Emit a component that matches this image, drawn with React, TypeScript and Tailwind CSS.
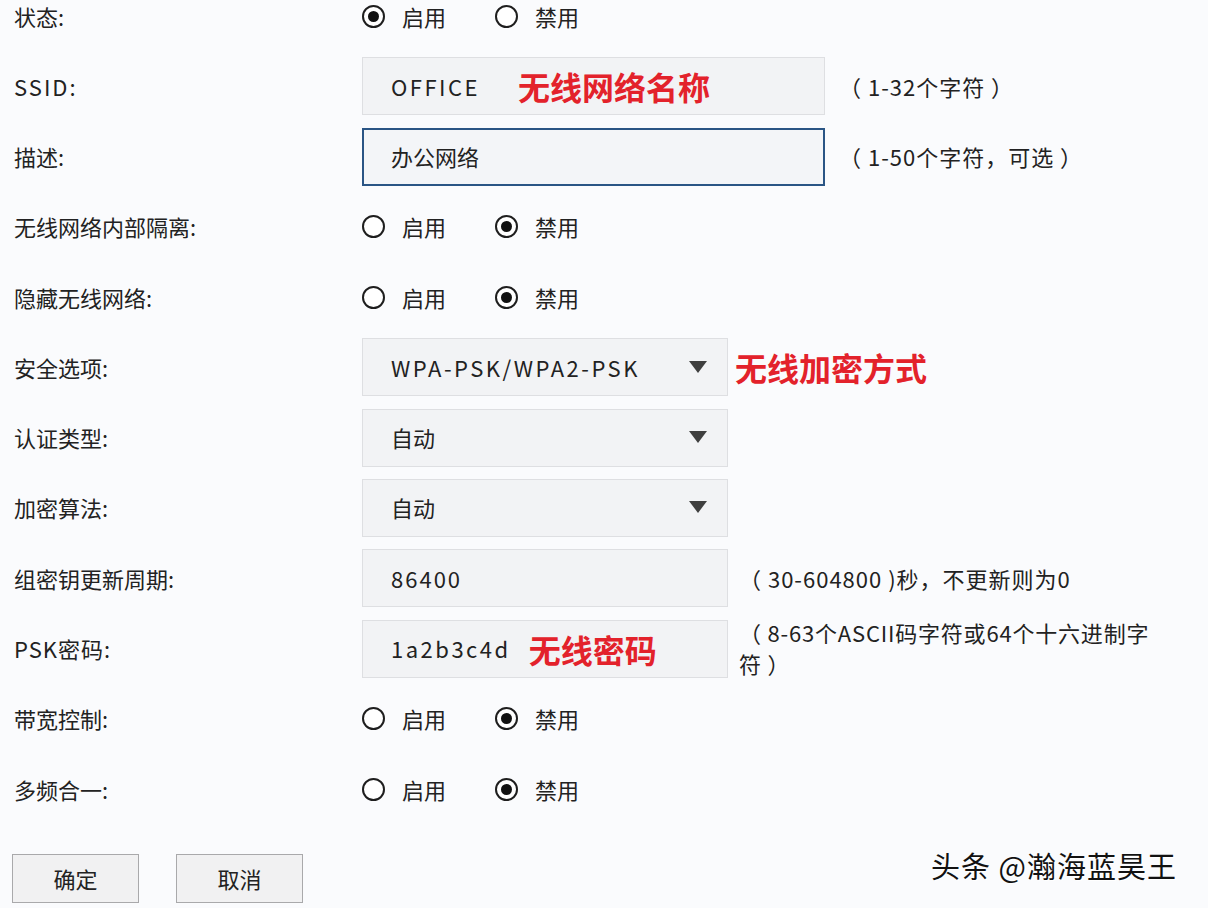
import React from "react";

const FONT = { fontFamily: '"Noto Sans CJK SC", "Noto Sans", sans-serif' };

function Radio({ checked }: { checked: boolean }) {
  return (
    <span className="w-[23px] h-[23px] rounded-full border-2 border-[#1e1e1e] bg-white flex items-center justify-center shrink-0">
      {checked && <span className="w-[11px] h-[11px] rounded-full bg-[#111]" />}
    </span>
  );
}

function RadioPair({ on }: { on: boolean }) {
  return (
    <div className="flex items-center">
      <div className="flex items-center gap-[17px] w-[133px]">
        <Radio checked={on} />
        <span>启用</span>
      </div>
      <div className="flex items-center gap-[17px]">
        <Radio checked={!on} />
        <span>禁用</span>
      </div>
    </div>
  );
}

function Row({ label, children }: { label: React.ReactNode; children: React.ReactNode }) {
  return (
    <div className="h-[70.27px] flex items-center">
      <div className="w-[348px] shrink-0">{label}</div>
      <div className="flex items-center">{children}</div>
    </div>
  );
}

function Box({ wide, focus, children }: { wide?: boolean; focus?: boolean; children: React.ReactNode }) {
  return (
    <div
      className={`${wide ? "w-[463px]" : "w-[366px]"} h-[58px] flex items-center ${
        focus ? "border-2 border-[#2a5585] bg-[#f3f5f8] pl-[27px]" : "border border-[#dedfe2] bg-[#f2f3f5] pl-[28px]"
      }`}
    >
      {children}
    </div>
  );
}

function Select({ value, latin }: { value: string; latin?: boolean }) {
  return (
    <div className="w-[366px] h-[58px] flex items-center justify-between pl-[28px] pr-[20px] border border-[#dedfe2] bg-[#f2f3f5]">
      <span className={latin ? "tracking-[2.5px]" : ""}>{value}</span>
      <svg width="18" height="13" viewBox="0 0 18 13">
        <polygon points="0,0 18,0 9,12" fill="#3f3f3f" />
      </svg>
    </div>
  );
}

const Red = ({ children, ml }: { children: React.ReactNode; ml: string }) => (
  <span className={`text-[32px] font-bold text-[#e3222b] leading-none ${ml}`}>{children}</span>
);

export default function App() {
  return (
    <div className="w-[1208px] h-[908px] overflow-hidden bg-[#fafbfd] text-[#222] text-[22px] relative" style={FONT}>
      <div className="pl-[14px] mt-[-19px]">
        <Row label="状态:">
          <RadioPair on={true} />
        </Row>
        <Row label={<span className="tracking-[2px]">SSID:</span>}>
          <Box wide>
            <span className="tracking-[2.5px]">OFFICE</span>
            <Red ml="ml-[38px]">无线网络名称</Red>
          </Box>
          <span className="ml-[14px] tracking-[1px]">（ 1-32个字符 ）</span>
        </Row>
        <Row label="描述:">
          <Box wide focus>
            <span>办公网络</span>
          </Box>
          <span className="ml-[14px] tracking-[1px]">（ 1-50个字符，可选 ）</span>
        </Row>
        <Row label="无线网络内部隔离:">
          <RadioPair on={false} />
        </Row>
        <Row label="隐藏无线网络:">
          <RadioPair on={false} />
        </Row>
        <Row label="安全选项:">
          <Select value="WPA-PSK/WPA2-PSK" latin />
          <Red ml="ml-[7px]">无线加密方式</Red>
        </Row>
        <Row label="认证类型:">
          <Select value="自动" />
        </Row>
        <Row label="加密算法:">
          <Select value="自动" />
        </Row>
        <Row label="组密钥更新周期:">
          <Box>
            <span className="tracking-[2px]">86400</span>
          </Box>
          <span className="ml-[11px] tracking-[1px]">（ 30-604800 )秒，不更新则为0</span>
        </Row>
        <Row label={<span className="tracking-[1px]">PSK密码:</span>}>
          <Box>
            <span className="tracking-[2.5px]">1a2b3c4d</span>
            <Red ml="ml-[18px]">无线密码</Red>
          </Box>
          <span className="ml-[11px] w-[460px] leading-[31px] self-start mt-[-2px] tracking-[0.8px]">
            （ 8-63个ASCII码字符或64个十六进制字
            <br />
            符 ）
          </span>
        </Row>
        <Row label="带宽控制:">
          <RadioPair on={false} />
        </Row>
        <Row label="多频合一:">
          <RadioPair on={false} />
        </Row>
      </div>
      <div className="flex items-center pl-[12px] mt-[30px] gap-[37px]">
        <button className="w-[127px] h-[49px] bg-[#f1f1f2] border border-[#a9a9ab] text-[22px] text-[#222]" style={FONT}>
          确定
        </button>
        <button className="w-[127px] h-[49px] bg-[#f1f1f2] border border-[#a9a9ab] text-[22px] text-[#222]" style={FONT}>
          取消
        </button>
      </div>
      <div
        className="absolute left-[931px] top-[845px] text-[29px] tracking-[1px] text-[#111] leading-[40px]"
        style={{ ...FONT, textShadow: "1px 1px 0 #fff" }}
      >
        头条 @瀚海蓝昊王
      </div>
    </div>
  );
}
